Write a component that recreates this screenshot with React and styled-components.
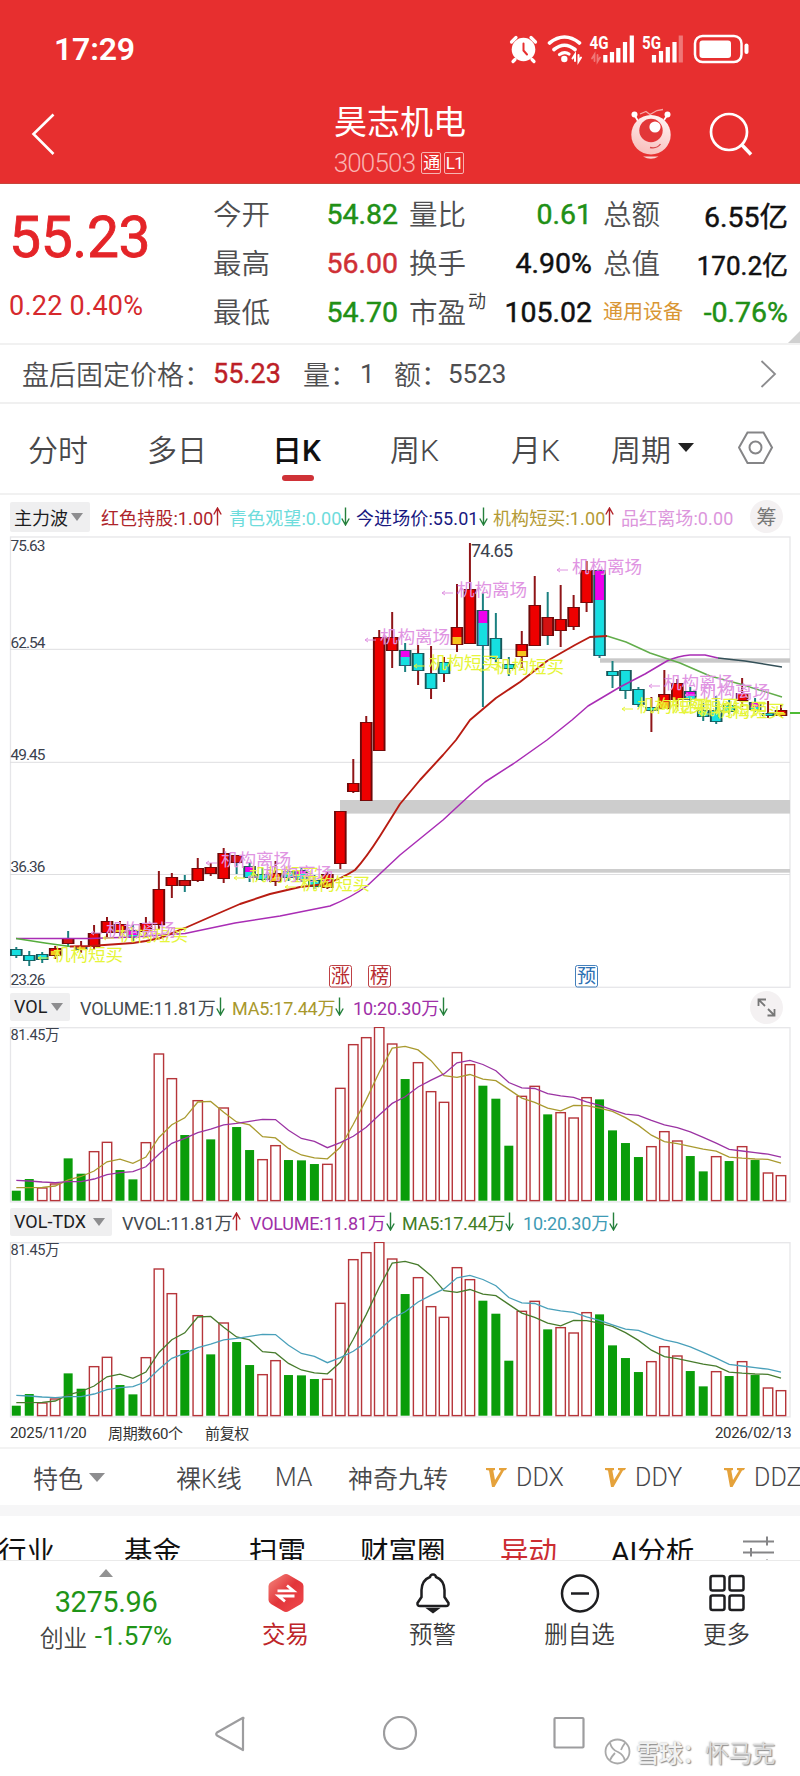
import styled, { createGlobalStyle } from "styled-components";

const GlobalStyle = createGlobalStyle`
  * {
    box-sizing: border-box;
  }
  body {
    margin: 0;
    background: #fefefe;
    font-family: Roboto, "Noto Sans CJK SC", sans-serif;
    color: #444;
  }
  svg {
    display: block;
    flex: none;
  }
`;

const STEP = 12.961;
const FIRST = 16.3;
const centerOf = (index) => FIRST + STEP * index;

// kind, body top, body bottom, wick top, wick bottom, second colour start
const candles = [
  ["c", 949, 956, 947, 958],
  ["c", 955, 961, 951, 966],
  ["c", 954, 960, 952, 963],
  ["ry", 948, 956, 946, 959, 951],
  ["t", 938, 944, 931, 947],
  ["y", 946, 950, 941, 953],
  ["r", 933, 947, 925, 950],
  ["r", 921, 933, 917, 937],
  ["ry", 924, 933, 921, 936, 930],
  ["mc", 930, 938, 925, 941, 935],
  ["r", 923, 932, 917, 935],
  ["r", 889, 925, 871, 930],
  ["r", 877, 886, 873, 898],
  ["t", 880, 886, 875, 892],
  ["r", 868, 881, 858, 882],
  ["r", 867, 874, 863, 876],
  ["r", 853, 879, 848, 883],
  ["t", 855, 863, 855, 874],
  ["mc", 866, 878, 863, 882, 872],
  ["c", 874, 880, 868, 881],
  ["ry", 873, 882, 861, 886, 878],
  ["c", 871, 878, 869, 881],
  ["mc", 870, 880, 867, 882, 874],
  ["c", 880, 887, 875, 889],
  ["ry", 874, 888, 871, 889, 881],
  ["r", 811, 864, 811, 869],
  ["r", 783, 792, 759, 793],
  ["r", 722, 801, 716, 801],
  ["r", 637, 751, 630, 751],
  ["r", 637, 651, 612, 668],
  ["mc", 650, 666, 643, 672, 657],
  ["cr", 653, 671, 645, 685],
  ["cr", 673, 689, 646, 699],
  ["cr", 662, 674, 657, 682],
  ["ry", 627, 645, 584, 652, 637],
  ["r", 589, 644, 543, 644],
  ["mc", 610, 646, 593, 707, 623],
  ["c", 638, 659, 613, 662],
  ["c", 664, 669, 657, 676],
  ["ry", 644, 657, 631, 668, 651],
  ["r", 605, 646, 576, 646],
  ["t", 617, 636, 592, 645],
  ["r", 619, 631, 585, 647],
  ["r", 607, 627, 595, 630],
  ["r", 570, 603, 561, 612],
  ["mc", 570, 656, 570, 658, 600],
  ["c", 671, 676, 661, 688],
  ["c", 670, 691, 670, 699],
  ["c", 689, 705, 687, 707],
  ["cr", 707, 711, 697, 732],
  ["ry", 694, 709, 670, 709, 702],
  ["r", 683, 700, 679, 707],
  ["mc", 691, 700, 687, 706, 696],
  ["c", 710, 717, 703, 721],
  ["c", 710, 722, 696, 724],
  ["c", 705, 712, 700, 714],
  ["r", 693, 701, 678, 707],
  ["mc", 702, 710, 698, 712, 707],
  ["cr", 713, 716, 701, 718],
  ["ry", 710, 716, 704, 717, 713],
];

// heights of the volume bars; negative values are falling days
const volumes = [
  -30, -65, 39, 51, -127, -81, 148, 176, -92, -64, 175, 441, 367, -197, 301, -184,
  279, -221, -152, 124, 166, -122, -121, -110, 110, 338, 469, 490, 521, 471, -365,
  415, 328, 296, 445, 409, -345, -306, -165, 314, 344, -259, 265, 249, 310, -304,
  -211, -173, -131, 163, 208, 180, -134, -88, 133, -119, 163, -122, 84, 76,
];

const ma5Head = [39, 39, 40, 44];
const ma10Head = [61, 59, 56, 54, 57, 57, 65, 78, 84];

const average = (size, head) =>
  volumes.map((_, i) => {
    if (i < head.length) return head[i];
    const part = volumes.slice(i - size + 1, i + 1);
    return part.reduce((sum, v) => sum + Math.abs(v), 0) / size;
  });

const toLine = (values) =>
  values.map((v, i) => `${centerOf(i).toFixed(1)},${(173.7 - v / 3).toFixed(1)}`).join(" ");

const ma5 = toLine(average(5, ma5Head));
const ma10 = toLine(average(10, ma10Head));

const fills = { r: "#ee0000", t: "#d41212", c: "#16dfe0", m: "#ee00ee", y: "#f5c41c" };

const notes = [
  ["buy", 53, 955],
  ["buy", 118, 935],
  ["sell", 106, 930],
  ["sell", 221, 860],
  ["buy", 249, 875],
  ["sell", 263, 874],
  ["buy", 300, 884],
  ["sell", 380, 637],
  ["sell", 457, 590],
  ["buy", 429, 663],
  ["buy", 494, 667],
  ["sell", 572, 567],
  ["sell", 664, 683],
  ["sell", 700, 692],
  ["buy", 637, 706],
  ["buy", 669, 706],
  ["buy", 697, 709],
  ["buy", 715, 711],
];

const marks = [
  { text: "涨", x: 340.5, color: "#b72b30" },
  { text: "榜", x: 379.5, color: "#b72b30" },
  { text: "预", x: 586.5, color: "#2f72b4" },
];

function Candle({ index, data }) {
  const [kind, top, bottom, wickTop, wickBottom, split] = data;
  const x = centerOf(index);
  const red = kind[0] === "r" || kind === "cr" || kind === "y";
  const edge = kind[0] === "r" || kind === "t" ? "#6d0a0a" : "#17585b";
  return (
    <g>
      <path d={`M${x} ${wickTop}V${wickBottom}`} stroke={red ? "#8f1518" : "#1a8080"} strokeWidth="2" />
      <rect x={x - 6.3} y={top} width="12.6" height={bottom - top} fill={edge} />
      <rect x={x - 4.4} y={top + 0.9} width="8.8" height={bottom - top - 1.8} fill={fills[kind[0]]} />
      {split && (
        <rect x={x - 4.4} y={split} width="8.8" height={bottom - split - 0.9} fill={fills[kind[1]]} />
      )}
    </g>
  );
}

function PriceChart() {
  return (
    <svg width="800" height="452" viewBox="0 536 800 452" fill="none">
      <rect x="10.5" y="537" width="779.5" height="450.3" stroke="#e6e6e9" strokeWidth="1.3" />
      <path d="M10 649.3H790M10 762.3H790M10 874.5H790" stroke="#dedee0" />
      <rect x="340" y="800" width="450" height="13.6" fill="#cdcdcd" />
      <rect x="327" y="869" width="463" height="3.7" fill="#cdcdcd" />
      <rect x="600" y="658.3" width="190" height="4.4" fill="#c9c9c9" />
      {candles.map((data, i) => (
        <Candle key={i} index={i} data={data} />
      ))}
      <g strokeWidth="1.5" strokeLinejoin="round">
        <path d="M16 938.5H90L133 937L185 933.5L235 923L280 916L330 906Q352 897 367 886L400 855L443 820L470 795L485 782L513 764L547 740L572 720L588 706L620 687L645 674L667 661Q678 656 690 655H705L718 658" stroke="#a92db5" />
        <path d="M718 658L745 661L782 667" stroke="#345058" />
        <path d="M16 938.5L45 943L70 946.5" stroke="#55ad3c" />
        <path d="M70 946.5L90 946L133 943L146 941L160 938L185 928L210 917L240 904L270 894L300 887L325 884Q341 879 355 870Q366 858 380 836L400 804L420 780L443 755L456 740L470 720L496 698L520 682L547 661L575 645L590 637L607 636" stroke="#b81c12" strokeWidth="1.9" />
        <path d="M607 636L626 642L650 653L680 663L710 676L740 684L782 697" stroke="#62ad4b" />
        <path d="M790 713H800" stroke="#4fbb35" strokeWidth="2" />
      </g>
      <g fontSize="17.6" fontWeight="400">
        {notes.map(([type, x, y], i) => {
          const color = type === "sell" ? "#e094e2" : "#e6f53a";
          return (
            <g key={i}>
              <path d={`M${x - 4} ${y + 3}h-11m3 -2l-3 2l3 2`} stroke={color} />
              <text x={x} y={y + 5.8} fill={color} textLength="70">
                {type === "sell" ? "机构离场" : "机构短买"}
              </text>
            </g>
          );
        })}
      </g>
      <g fill="#3b414d" fontSize="15.4">
        <text x="10.5" y="550.5" textLength="35">75.63</text>
        <text x="10.5" y="647.5" textLength="35">62.54</text>
        <text x="10.5" y="760" textLength="35">49.45</text>
        <text x="10.5" y="872" textLength="35">36.36</text>
        <text x="10.5" y="985" textLength="35">23.26</text>
        <text x="471" y="557" fontSize="18" textLength="42">74.65</text>
      </g>
      {marks.map(({ text, x, color }) => (
        <g key={text}>
          <rect x={x - 11} y="965.5" width="22" height="21.5" rx="2" fill="#fff" stroke={color} strokeWidth="0.9" />
          <text x={x} y="983.3" fontSize="19" fill={color} textAnchor="middle">{text}</text>
        </g>
      ))}
    </svg>
  );
}

function VolumeChart({ short, long }) {
  return (
    <svg width="800" height="176" viewBox="0 0 800 176" fill="none">
      <rect x="10.5" y="0.7" width="779.5" height="174.2" stroke="#e6e6e9" strokeWidth="1.3" />
      {volumes.map((v, i) => {
        const h = Math.abs(v) / 3;
        const x = centerOf(i);
        return v < 0 ? (
          <rect key={i} x={x - 4.5} y={173.7 - h} width="9" height={h} fill="#0a9d0a" />
        ) : (
          <rect key={i} x={x - 4.7} y={174 - h} width="9.4" height={h - 0.4} stroke="#b6353a" strokeWidth="1.4" />
        );
      })}
      <g strokeWidth="1.3">
        <polyline points={ma5} stroke={short} />
        <polyline points={ma10} stroke={long} />
      </g>
      <text x="10.5" y="13" fontSize="14.6" fill="#3b414d" textLength="49">81.45万</text>
    </svg>
  );
}

const Page = styled.main`
  width: 800px;
  height: 1776px;
  overflow: hidden;
  background: #fff;
`;

const Header = styled.header`
  height: 184px;
  background: #e72f2f;
  color: #fff;
  border-bottom: 1px solid #c8453b;
`;

const StatusBar = styled.div`
  height: 98px;
  padding: 0 50px 0 54px;
  display: flex;
  align-items: center;
  justify-content: space-between;
`;

const Clock = styled.span`
  font-size: 32px;
  font-weight: 600;
  letter-spacing: -0.2px;
`;

const NavBar = styled.div`
  height: 85px;
  display: grid;
  grid-template-columns: 130px 540px 130px;
`;

const BackButton = styled.div`
  padding-top: 6px;
`;

const StockTitle = styled.div`
  display: flex;
  flex-direction: column;
  align-items: center;
  padding-top: 2px;
`;

const StockName = styled.h1`
  margin: 0;
  font-size: 33px;
  font-weight: 400;
  line-height: 45px;
`;

const StockCode = styled.div`
  display: flex;
  align-items: center;
  gap: 3px;
  height: 36px;
  margin-left: -2px;
  color: #f9b3b1;
  font-size: 26px;
  font-weight: 300;
  letter-spacing: -0.8px;
`;

const Tag = styled.span`
  width: 20px;
  height: 22px;
  margin-left: ${({ $first }) => ($first ? "3px" : "0")};
  border: 1px solid #f6b4b1;
  border-radius: 2px;
  color: #fff;
  font-size: 17px;
  font-weight: 400;
  line-height: 20px;
  text-align: center;
`;

const NavActions = styled.div`
  display: flex;
  padding-top: 9px;
  margin-left: -40px;
  gap: 36px;
  svg + svg {
    margin-top: 3px;
  }
`;

const Quote = styled.section`
  position: relative;
  height: 161px;
  display: grid;
  grid-template-columns: 204px 196px 194px 196px;
  padding: 5px 0 0 10px;
  border-bottom: 2px solid #f1f1f1;
`;

const Corner = styled.i`
  position: absolute;
  right: 0;
  bottom: 0;
  border-left: 12px solid transparent;
  border-bottom: 12px solid #d0d0d0;
`;

const Price = styled.div`
  display: flex;
  flex-direction: column;
  color: #d6292d;
  strong {
    color: #e42428;
    font-size: 57px;
    font-weight: 400;
    -webkit-text-stroke: 0.8px;
    letter-spacing: -0.4px;
    line-height: 98px;
    margin-left: -1px;
  }
  span {
    font-size: 27px;
    line-height: 38px;
    letter-spacing: 0.25px;
    margin-left: -1px;
  }
`;

const QuoteColumn = styled.dl`
  margin: 0;
`;

const QuoteRow = styled.div`
  position: relative;
  height: 49px;
  display: flex;
  align-items: center;
  justify-content: space-between;
  padding-right: ${({ $end }) => $end}px;
  dt {
    margin: -2px 0 0 -1px;
    font-size: ${({ $sector }) => ($sector ? 20 : 28.5)}px;
    color: ${({ $sector }) => ($sector ? "#d99634" : "#4e4e50")};
    font-weight: ${({ $sector }) => ($sector ? 400 : 350)};
  }
  dd {
    margin: 1px 0 0;
    font-size: ${({ $small }) => ($small ? 26 : 28.5)}px;
    font-weight: 400;
    -webkit-text-stroke: 0.45px;
    color: ${({ $color }) => $color};
  }
`;

const Sup = styled.sup`
  position: absolute;
  left: 58px;
  top: 5px;
  font-size: 18px;
  line-height: 20px;
`;

const AfterHours = styled.section`
  height: 59px;
  display: grid;
  grid-template-columns: 191px 90px 57px 34px 54px 312px 20px;
  align-items: center;
  padding-left: 22px;
  border-bottom: 2px solid #f0f0f0;
  font-size: 27px;
  font-weight: 350;
  color: #4e4e50;
  white-space: nowrap;
  b {
    font-weight: 400;
    -webkit-text-stroke: 0.4px;
    color: #bd1f27;
    font-size: 27px;
  }
  span {
    font-weight: 400;
    font-size: 26px;
  }
`;

const Periods = styled.nav`
  height: 91px;
  display: grid;
  grid-template-columns: 119px 125px 118px 121px 100px 127px 36px;
  padding: 0 0 2px 28px;
  border-bottom: 2px solid #f1f1f1;
  align-items: center;
`;

const Period = styled.span`
  position: relative;
  display: flex;
  align-items: center;
  gap: 7px;
  font-size: 30px;
  font-weight: ${({ $active }) => ($active ? 500 : 350)};
  color: ${({ $active }) => ($active ? "#111" : "#48484a")};
  &::after {
    content: "";
    display: ${({ $active }) => ($active ? "block" : "none")};
    position: absolute;
    left: 10px;
    top: 49px;
    width: 32px;
    height: 6px;
    border-radius: 3px;
    background: #cf3237;
  }
`;

const Caret = styled.i`
  flex: none;
  border: ${({ $size }) => $size}px solid transparent;
  border-bottom: 0;
  border-top: ${({ $tall }) => $tall}px solid ${({ $color }) => $color || "#8d8d8f"};
`;

const Legend = styled.div`
  height: ${({ $height }) => $height}px;
  padding: ${({ $top }) => $top}px 0 0 10px;
  display: flex;
  align-items: flex-start;
`;

const Picker = styled.div`
  width: ${({ $width }) => $width}px;
  height: ${({ $tall }) => ($tall ? 30 : 28)}px;
  padding: 0 7px 1px 4px;
  margin-right: ${({ $after }) => $after}px;
  display: flex;
  align-items: center;
  justify-content: space-between;
  border-radius: 2px;
  background: #efeff0;
  color: #1d1d1f;
  font-size: 18px;
`;

const Value = styled.span`
  width: ${({ $width }) => $width}px;
  height: ${({ $tall }) => ($tall ? 29 : 27)}px;
  display: flex;
  align-items: center;
  color: ${({ $color }) => $color};
  font-size: 18px;
  letter-spacing: ${({ $tall }) => ($tall ? "0.1px" : "-0.2px")};
  white-space: nowrap;
`;

const Round = styled.span`
  width: 33px;
  height: 33px;
  margin-left: ${({ $left }) => $left}px;
  margin-top: -2px;
  border-radius: 50%;
  background: #f4f1f2;
  color: #777;
  display: flex;
  align-items: center;
  justify-content: center;
  font-size: 20px;
`;

const ChartDates = styled.div`
  height: 31px;
  display: grid;
  grid-template-columns: 98px 97px 510px 75px;
  align-items: center;
  padding-left: 10px;
  border-bottom: 2px solid #f3f3f3;
  font-size: 15px;
  letter-spacing: -0.35px;
  color: #333;
  white-space: nowrap;
`;

const Indicators = styled.div`
  height: 67px;
  display: flex;
  align-items: center;
  padding-left: 33px;
  border-bottom: 11px solid #f6f6f7;
  overflow: hidden;
`;

const Indicator = styled.span`
  flex: none;
  width: ${({ $width }) => $width}px;
  display: flex;
  align-items: center;
  gap: ${({ $gap }) => $gap || 9}px;
  font-size: 25px;
  font-weight: 350;
  color: #48484a;
  white-space: nowrap;
`;

const Divider = styled.i`
  width: 1px;
  height: 34px;
  margin-right: 34px;
  background: #f0f0f2;
`;

const Topics = styled.div`
  height: 45px;
  display: grid;
  grid-template-columns: 124px 125px 111px 140px 111px 132px 57px;
  border-bottom: 1px solid #eaeaea;
  overflow: hidden;
  white-space: nowrap;
`;

const Topic = styled.span`
  padding-top: 17px;
  font-size: 28.5px;
  line-height: 40px;
  margin-left: ${({ $shift }) => $shift || 0}px;
  color: ${({ $hot }) => ($hot ? "#cc2d32" : "#111")};
`;

const BottomBar = styled.footer`
  height: 130px;
  display: grid;
  grid-template-columns: 212px 147px 147px 147px 147px;
`;

const Index = styled.div`
  display: flex;
  flex-direction: column;
  align-items: center;
  padding-top: 8px;
  color: #1f9418;
  > b {
    font-weight: 400;
    font-size: 29px;
    line-height: 38px;
    letter-spacing: -0.4px;
    margin-top: 6px;
  }
  > div {
    display: flex;
    align-items: center;
    gap: 8px;
    height: 30px;
    font-size: 26px;
    letter-spacing: 0.1px;
  }
  small {
    font-size: 24px;
    font-weight: 350;
    letter-spacing: -0.5px;
    color: #444;
  }
`;

const CaretUp = styled.i`
  border: 7px solid transparent;
  border-top: 0;
  border-bottom: 8px solid #929292;
`;

const Action = styled.div`
  display: flex;
  flex-direction: column;
  align-items: center;
  padding-top: 11px;
  font-size: 23.5px;
  font-weight: ${({ $active }) => ($active ? 400 : 350)};
  color: ${({ $active }) => ($active ? "#bd2529" : "#3c3c3e")};
  line-height: 34px;
  svg {
    margin-bottom: 4px;
  }
`;

const SystemBar = styled.div`
  height: 86px;
  display: grid;
  grid-template-columns: 215px 168px 170px 51px 196px;
  align-items: flex-start;
  padding-top: 22px;
  svg {
    margin-top: 3px;
  }
`;

const Watermark = styled.div`
  display: flex;
  align-items: center;
  gap: 5px;
  height: 40px;
  margin-top: 18px;
  font-size: 24px;
  font-weight: 500;
  letter-spacing: -0.9px;
  color: #f2f2f2;
  white-space: nowrap;
  text-shadow: 1px 1px 1px #8e8e8e, 0 0 2px #aaa;
  svg {
    margin-top: 0;
  }
  em {
    font-style: normal;
    font-weight: 350;
    color: #dcdcdc;
  }
`;

const Arrow = ({ up }) => (
  <svg width="9" height="19" viewBox="0 0 9 19" fill="none" stroke={up ? "#b22229" : "#25803c"} strokeWidth="1.4">
    <path d={up ? "M4.5 18.5V1M.8 7.500L4.5 1L8.200 7.500" : "M4.5 .5V18M.8 11.500L4.5 18L8.200 11.500"} />
  </svg>
);

const StatusIcons = () => (
  <svg width="242" height="32" viewBox="508 33 242 32" fill="none" stroke="#fff" strokeLinecap="round">
    <circle cx="523.500" cy="49.500" r="11.800" fill="#fff" stroke="none" />
    <path d="M511.500 42L516 37.500M535.500 42L531 37.500M515 59.500L513 61.500M532 59.500L534 61.500" strokeWidth="3.200" />
    <path d="M523.500 43.500V50.500L527 54.500" stroke="#e72f2f" strokeWidth="2" />
    <path d="M549.500 43Q564.500 31 579.500 43M554 49.500Q564.500 41 575 49.500" strokeWidth="3.600" />
    <path d="M559.500 54.500Q564.500 51 569 54" strokeWidth="3.200" />
    <circle cx="564.300" cy="59" r="3.200" fill="#fff" stroke="none" />
    <path d="M575 61V54.500L572.500 58.500M578.500 55V61.500L581 57.500" strokeWidth="2" />
    <path d="M594.500 61V54.500L592 58.500M597.500 55V61.500L600 57.500" strokeWidth="1.800" opacity=".35" />
    <g strokeWidth="4.200" strokeLinecap="butt">
      <path d="M605.300 62.500V55M612 62.500V52M618.300 62.500V48M625 62.500V42M631.800 62.500V35.500" />
      <path d="M654 62.500V55M661 62.500V51M667.800 62.500V47M674.500 62.500V42" />
      <path d="M680.800 62.500V35.500" opacity=".35" />
    </g>
    <g fill="#fff" stroke="none" fontSize="18.500" fontWeight="700">
      <text x="589.500" y="49" textLength="19" lengthAdjust="spacingAndGlyphs">4G</text>
      <text x="642" y="49" textLength="19" lengthAdjust="spacingAndGlyphs">5G</text>
    </g>
    <rect x="695" y="36" width="46.500" height="26" rx="7.500" strokeWidth="2.500" />
    <rect x="699.500" y="40.500" width="31.500" height="17.500" rx="3" fill="#fff" stroke="none" />
    <path d="M746.500 45.500V52" strokeWidth="4" />
  </svg>
);

const BackIcon = () => (
  <svg width="60" height="60" viewBox="0 104 60 60" fill="none" stroke="#fff" strokeWidth="2.600">
    <path d="M53.500 114.500L33.500 134L53.500 154" />
  </svg>
);

const RobotIcon = () => (
  <svg width="42" height="56" viewBox="631 107 42 56" fill="none">
    <defs>
      <linearGradient id="robot" x1="0.600" y1="0" x2="0.300" y2="1">
        <stop offset="0" stopColor="#fff3f2" />
        <stop offset="1" stopColor="#f8bdba" />
      </linearGradient>
    </defs>
    <path d="M635.500 115L639 121M668.500 115L665 120" stroke="#fff" strokeWidth="1.800" />
    <path d="M641 114L647 111.500L651 114.500L658 110.500L664 109.500" stroke="#f6aaa8" strokeWidth="1.300" />
    <circle cx="635.500" cy="114.500" r="3" fill="#fff" />
    <circle cx="668.500" cy="114.500" r="3" fill="#fff" />
    <circle cx="652" cy="134.800" r="19.700" fill="url(#robot)" />
    <circle cx="652" cy="130.500" r="11.700" fill="#e23738" />
    <circle cx="656" cy="127" r="5.600" fill="#fff" />
    <path d="M651 147.500Q658 149 661.500 144" stroke="#d8494a" strokeWidth="1.300" />
    <path d="M644 156.500H659.500Q652 161 644 156.500Z" fill="#fbd3d1" />
  </svg>
);

const SearchIcon = () => (
  <svg width="46" height="48" viewBox="708 110 46 48" fill="none" stroke="#fff" strokeWidth="2.700">
    <circle cx="729" cy="132" r="18" />
    <path d="M742 145L751 154.500" strokeWidth="3.500" />
  </svg>
);

const VipIcon = () => (
  <svg width="21" height="19" viewBox="0 0 21 19" fill="#e5a23b">
    <path d="M0 0H9V2L7.300 2.500L9 12L15 2.500L13 2V0H21L20 2L18 2.500L8.500 19H6L3 2.500L0 2Z" />
  </svg>
);

const quotes = [
  {
    end: 12,
    rows: [
      { label: "今开", value: "54.82", color: "#219016" },
      { label: "最高", value: "56.00", color: "#cf3035" },
      { label: "最低", value: "54.70", color: "#219016" },
    ],
  },
  {
    end: 12,
    rows: [
      { label: "量比", value: "0.61", color: "#219016" },
      { label: "换手", value: "4.90%", color: "#111" },
      { label: "市盈", value: "105.02", color: "#111", sup: "动" },
    ],
  },
  {
    end: 12,
    rows: [
      { label: "总额", value: "6.55亿", color: "#111" },
      { label: "总值", value: "170.2亿", color: "#111", small: true },
      { label: "通用设备", value: "-0.76%", color: "#219016", sector: true },
    ],
  },
];

const mainLegend = [
  { text: "红色持股:1.00", color: "#ad242a", width: 128, up: true },
  { text: "青色观望:0.00", color: "#6edcdc", width: 127 },
  { text: "今进场价:55.01", color: "#18187f", width: 137 },
  { text: "机构短买:1.00", color: "#b49a35", width: 128, up: true },
  { text: "品红离场:0.00", color: "#dc96dc", width: 114, plain: true },
];

const volLegend = [
  { text: "VOLUME:11.81万", color: "#444a50", width: 152 },
  { text: "MA5:17.44万", color: "#a8982c", width: 121 },
  { text: "10:20.30万", color: "#a02fa8", width: 94 },
];

const tdxLegend = [
  { text: "VVOL:11.81万", color: "#444a50", width: 128, up: true },
  { text: "VOLUME:11.81万", color: "#a02fa8", width: 152 },
  { text: "MA5:17.44万", color: "#417d26", width: 121 },
  { text: "10:20.30万", color: "#3e9bb5", width: 94 },
];

const Values = ({ items, tall }) =>
  items.map((item) => (
    <Value key={item.text} $width={item.width} $color={item.color} $tall={tall}>
      {item.text}
      {!item.plain && <Arrow up={item.up} />}
    </Value>
  ));

function App() {
  return (
    <Page>
      <GlobalStyle />
      <Header>
        <StatusBar>
          <Clock>17:29</Clock>
          <StatusIcons />
        </StatusBar>
        <NavBar>
          <BackButton>
            <BackIcon />
          </BackButton>
          <StockTitle>
            <StockName>昊志机电</StockName>
            <StockCode>
              300503
              <Tag $first>通</Tag>
              <Tag>L1</Tag>
            </StockCode>
          </StockTitle>
          <NavActions>
            <RobotIcon />
            <SearchIcon />
          </NavActions>
        </NavBar>
      </Header>

      <Quote>
        <Price>
          <strong>55.23</strong>
          <span>0.22 0.40%</span>
        </Price>
        {quotes.map(({ end, rows }, i) => (
          <QuoteColumn key={i}>
            {rows.map((row) => (
              <QuoteRow key={row.label} $end={end} $color={row.color} $small={row.small} $sector={row.sector}>
                <dt>{row.label}</dt>
                {row.sup && <Sup>{row.sup}</Sup>}
                <dd>{row.value}</dd>
              </QuoteRow>
            ))}
          </QuoteColumn>
        ))}
        <Corner />
      </Quote>

      <AfterHours>
        盘后固定价格：
        <b>55.23</b>
        <div>量：</div>
        <span>1</span>
        <div>额：</div>
        <span>5523</span>
        <svg width="18" height="30" viewBox="0 0 18 30" fill="none" stroke="#8c8c8e" strokeWidth="1.8">
          <path d="M1.500 2L15 15L1.500 28" />
        </svg>
      </AfterHours>

      <Periods>
        <Period>分时</Period>
        <Period>多日</Period>
        <Period $active>日K</Period>
        <Period>周K</Period>
        <Period>月K</Period>
        <Period>
          周期
          <Caret $size={8} $tall={9} $color="#222" />
        </Period>
        <svg width="36" height="34" viewBox="0 0 36 34" fill="none" stroke="#858587" strokeWidth="2">
          <path d="M9.500 1.500H25.500L34 16.500L25.500 32H9.500L1 16.500Z" />
          <circle cx="17.500" cy="16.500" r="6" />
        </svg>
      </Periods>

      <Legend $height={41} $top={7}>
        <Picker $width={80} $after={11} $tall>
          主力波
          <Caret $size={6.5} $tall={8} />
        </Picker>
        <Values items={mainLegend} tall />
        <Round $left={15}>筹</Round>
      </Legend>
      <PriceChart />
      <Legend $height={39} $top={5}>
        <Picker $width={60} $after={10}>
          VOL
          <Caret $size={6.5} $tall={8} />
        </Picker>
        <Values items={volLegend} />
        <Round $left={303}>
          <svg width="19" height="19" viewBox="0 0 19 19" fill="none" stroke="#777" strokeWidth="1.8">
            <path d="M1.500 8V1.500H9M1.500 1.500L8 8M11 11L17.500 17.500M10.500 17.500H17.500V11" />
          </svg>
        </Round>
      </Legend>
      <VolumeChart short="#a99a2f" long="#9b33a3" />
      <Legend $height={39} $top={5}>
        <Picker $width={102} $after={10}>
          VOL-TDX
          <Caret $size={6.5} $tall={8} />
        </Picker>
        <Values items={tdxLegend} />
      </Legend>
      <VolumeChart short="#477b2c" long="#49a0ba" />

      <ChartDates>
        <span>2025/11/20</span>
        <span>周期数60个</span>
        <span>前复权</span>
        <span>2026/02/13</span>
      </ChartDates>

      <Indicators>
        <Indicator $width={109} $gap={6}>
          特色
          <Caret $size={8} $tall={9} />
        </Indicator>
        <Divider />
        <Indicator $width={99}>裸K线</Indicator>
        <Indicator $width={73}>MA</Indicator>
        <Indicator $width={138}>神奇九转</Indicator>
        {["DDX", "DDY", "DDZ"].map((name) => (
          <Indicator key={name} $width={119}>
            <VipIcon />
            {name}
          </Indicator>
        ))}
      </Indicators>

      <Topics>
        <Topic $shift={-2}>行业</Topic>
        <Topic>基金</Topic>
        <Topic>扫雷</Topic>
        <Topic>财富圈</Topic>
        <Topic $hot>异动</Topic>
        <Topic>AI分析</Topic>
        <svg width="32" height="46" viewBox="0 0 32 46" stroke="#858587" strokeWidth="2">
          <path d="M0 25.500H31M24 20.500V29.500M0 36.500H31M8 32V40.500M24 43.500V49" />
        </svg>
      </Topics>

      <BottomBar>
        <Index>
          <CaretUp />
          <b>3275.96</b>
          <div>
            <small>创业</small>
            -1.57%
          </div>
        </Index>
        <Action $active>
          <svg width="38" height="42" viewBox="0 0 38 42">
            <defs>
              <linearGradient id="trade" x1="0" y1="0" x2="1" y2="1">
                <stop offset="0" stopColor="#f58a80" />
                <stop offset=".5" stopColor="#e2353a" />
                <stop offset="1" stopColor="#f04a4e" />
              </linearGradient>
            </defs>
            <path d="M16 3Q19 1 22 3L34 10Q36.500 11.500 36.500 14V28Q36.500 30.500 34 32L22 39Q19 41 16 39L4 32Q1.500 30.500 1.500 28V14Q1.500 11.500 4 10Z" fill="url(#trade)" />
            <path d="M10.500 18.800H26.500L20 13.500M27.500 24H11.500L18 29.300" fill="none" stroke="#fff" strokeWidth="2.800" />
          </svg>
          交易
        </Action>
        <Action>
          <svg width="38" height="42" viewBox="0 0 38 42" fill="none" stroke="#1e1e20" strokeWidth="2.500">
            <path d="M19 2.500Q21.500 2.500 22 5Q30 8 30.500 18V25L34.500 31Q35 34 32 34H6Q3 34 3.500 31L7.500 25V18Q8 8 16 5Q16.500 2.500 19 2.500Z" />
            <path d="M15 37H23L19 40Z" fill="#1e1e20" />
          </svg>
          预警
        </Action>
        <Action>
          <svg width="40" height="42" viewBox="0 0 40 42" fill="none" stroke="#1e1e20" strokeWidth="2.500">
            <circle cx="20" cy="21.500" r="18" />
            <path d="M11 21.500H29" />
          </svg>
          删自选
        </Action>
        <Action>
          <svg width="38" height="42" viewBox="0 0 38 42" fill="none" stroke="#1e1e20" strokeWidth="2.500">
            <rect x="2.500" y="4" width="14" height="14.500" rx="2" />
            <rect x="21.500" y="4" width="14" height="14.500" rx="2" />
            <rect x="2.500" y="23.500" width="14" height="14.500" rx="2" />
            <rect x="21.500" y="23.500" width="14" height="14.500" rx="2" />
          </svg>
          更多
        </Action>
      </BottomBar>

      <SystemBar>
        <i />
        <svg width="30" height="36" viewBox="0 0 30 36" fill="none" stroke="#9d9d9f" strokeWidth="2.200">
          <path d="M28 3Q29 1.500 28 1.800L2 16.500Q.5 18 2 19.500L28 34Z" strokeLinejoin="round" />
        </svg>
        <svg width="36" height="36" viewBox="0 0 36 36" fill="none" stroke="#9d9d9f" strokeWidth="2.200">
          <circle cx="17" cy="17" r="16" />
        </svg>
        <svg width="32" height="36" viewBox="0 0 32 36" fill="none" stroke="#9d9d9f" strokeWidth="2.200">
          <rect x="1.500" y="2" width="29" height="29.500" rx="1" />
        </svg>
        <Watermark>
          <svg width="27" height="27" viewBox="0 0 27 27" fill="none" stroke="#a9a9a9" strokeWidth="1.800">
            <circle cx="13.500" cy="13.500" r="12" />
            <path d="M6 5Q8 12 14 14Q20 17 21 23M21 5Q18 9 17 12M11 15Q8 18 6 22" />
          </svg>
          <span>
            雪球：<em>怀马克</em>
          </span>
        </Watermark>
      </SystemBar>
    </Page>
  );
}

export default App;
